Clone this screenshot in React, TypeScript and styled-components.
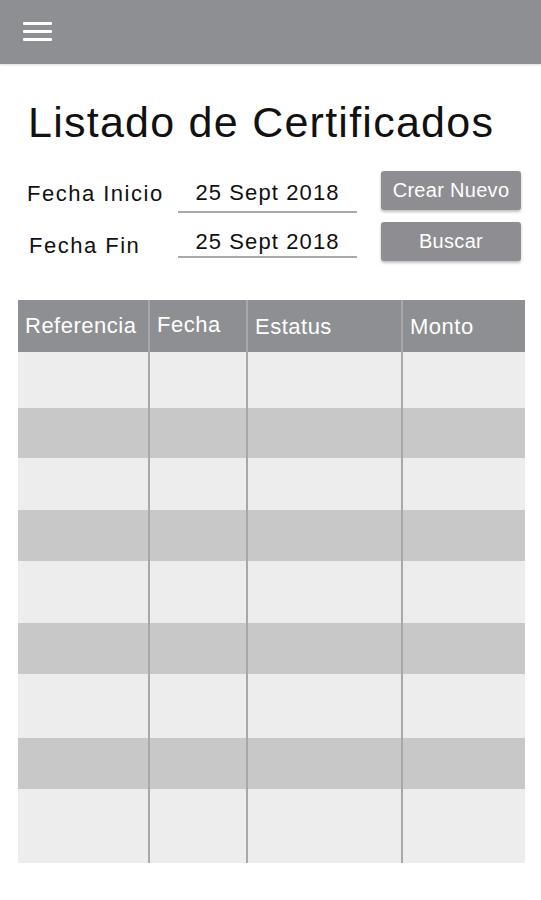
import React from "react";
import styled, { createGlobalStyle } from "styled-components";

const GlobalStyle = createGlobalStyle`
  html, body {
    margin: 0;
    padding: 0;
    background: #ffffff;
  }
  body {
    font-family: "Liberation Sans", Arial, Helvetica, sans-serif;
    color: #111;
  }
`;

const Page = styled.main`
  width: 541px;
  min-height: 900px;
  display: flex;
  flex-direction: column;
  background: #fff;
`;

const AppBar = styled.header`
  height: 64px;
  background: #8e8f93;
  display: flex;
  align-items: center;
  padding-left: 23px;
  box-shadow: 0 1px 2px rgba(0, 0, 0, 0.15);
`;

const MenuButton = styled.div`
  width: 29px;
  display: flex;
  flex-direction: column;
  gap: 5px;
  margin-top: -2px;
  span {
    display: block;
    height: 3px;
    background: #fff;
    border-radius: 1px;
  }
`;

const Title = styled.h1`
  margin: 33px 0 0 28px;
  font-size: 43px;
  font-weight: 400;
  letter-spacing: 1.25px;
  color: #111;
  line-height: 50px;
`;

const Filters = styled.section`
  margin-top: 24px;
  display: grid;
  grid-template-columns: 151px 179px 140px;
  grid-auto-rows: 42px;
  row-gap: 9px;
  padding-left: 27px;
  align-items: start;
`;

const Label = styled.span<{ $shift?: number; $dy?: number }>`
  font-size: 22px;
  letter-spacing: 1.5px;
  color: #111;
  line-height: 42px;
  margin-left: ${(p) => p.$shift ?? 0}px;
  margin-top: ${(p) => p.$dy ?? 0}px;
`;

const DateField = styled.div<{ $h: number; $pb: number }>`
  height: ${(p) => p.$h}px;
  border-bottom: 2px solid #a9a9ad;
  display: flex;
  align-items: flex-end;
  justify-content: center;
  padding-bottom: ${(p) => p.$pb}px;
  box-sizing: border-box;
  font-size: 22px;
  letter-spacing: 1.1px;
  color: #111;
`;

const Button = styled.button`
  height: 39px;
  margin-left: 24px;
  width: 140px;
  border: none;
  border-radius: 3px;
  background: #8e8e92;
  color: #fff;
  font-family: "Liberation Sans", Arial, sans-serif;
  font-size: 20px;
  letter-spacing: 0.3px;
  box-shadow: 0 2px 3px rgba(0, 0, 0, 0.25);
  padding: 0;
`;

const Table = styled.div`
  margin: 36px 0 0 18px;
  width: 507px;
  display: flex;
  flex-direction: column;
`;

const Row = styled.div<{ $h: number; $tone: "head" | "light" | "dark" }>`
  height: ${(p) => p.$h}px;
  display: flex;
  background: ${(p) =>
    p.$tone === "head" ? "#8e8f93" : p.$tone === "dark" ? "#c8c8c8" : "#ededed"};
`;

const Cell = styled.div<{ $w: number; $first?: boolean }>`
  width: ${(p) => p.$w}px;
  box-sizing: border-box;
  border-left: ${(p) => (p.$first ? "none" : "2px solid #a8a8ab")};
  color: #fff;
  font-size: 22px;
  letter-spacing: 0.5px;
  padding-left: 7px;
  display: flex;
  align-items: center;
  white-space: nowrap;
`;

const HeadText = styled.span<{ $dy: number }>`
  margin-top: ${(p) => p.$dy}px;
`;

const columns = [
  { title: "Referencia", w: 130, dy: 0 },
  { title: "Fecha", w: 98, dy: -3 },
  { title: "Estatus", w: 155, dy: 2 },
  { title: "Monto", w: 124, dy: 2 },
];

const rowHeights = [56, 50, 52, 51, 62, 51, 64, 51, 74];

export default function App() {
  return (
    <Page>
      <GlobalStyle />
      <AppBar>
        <MenuButton>
          <span />
          <span />
          <span />
        </MenuButton>
      </AppBar>
      <Title>Listado de Certificados</Title>
      <Filters>
        <Label $dy={2}>Fecha Inicio</Label>
        <DateField $h={42} $pb={5}>25 Sept 2018</DateField>
        <Button>Crear Nuevo</Button>
        <Label $shift={2} $dy={3}>Fecha Fin</Label>
        <DateField $h={36} $pb={1}>25 Sept 2018</DateField>
        <Button>Buscar</Button>
      </Filters>
      <Table>
        <Row $h={52} $tone="head">
          {columns.map((c, i) => (
            <Cell key={c.title} $w={c.w} $first={i === 0}>
              <HeadText $dy={c.dy}>{c.title}</HeadText>
            </Cell>
          ))}
        </Row>
        {rowHeights.map((h, r) => (
          <Row key={r} $h={h} $tone={r % 2 === 0 ? "light" : "dark"}>
            {columns.map((c, i) => (
              <Cell key={c.title} $w={c.w} $first={i === 0} />
            ))}
          </Row>
        ))}
      </Table>
    </Page>
  );
}
